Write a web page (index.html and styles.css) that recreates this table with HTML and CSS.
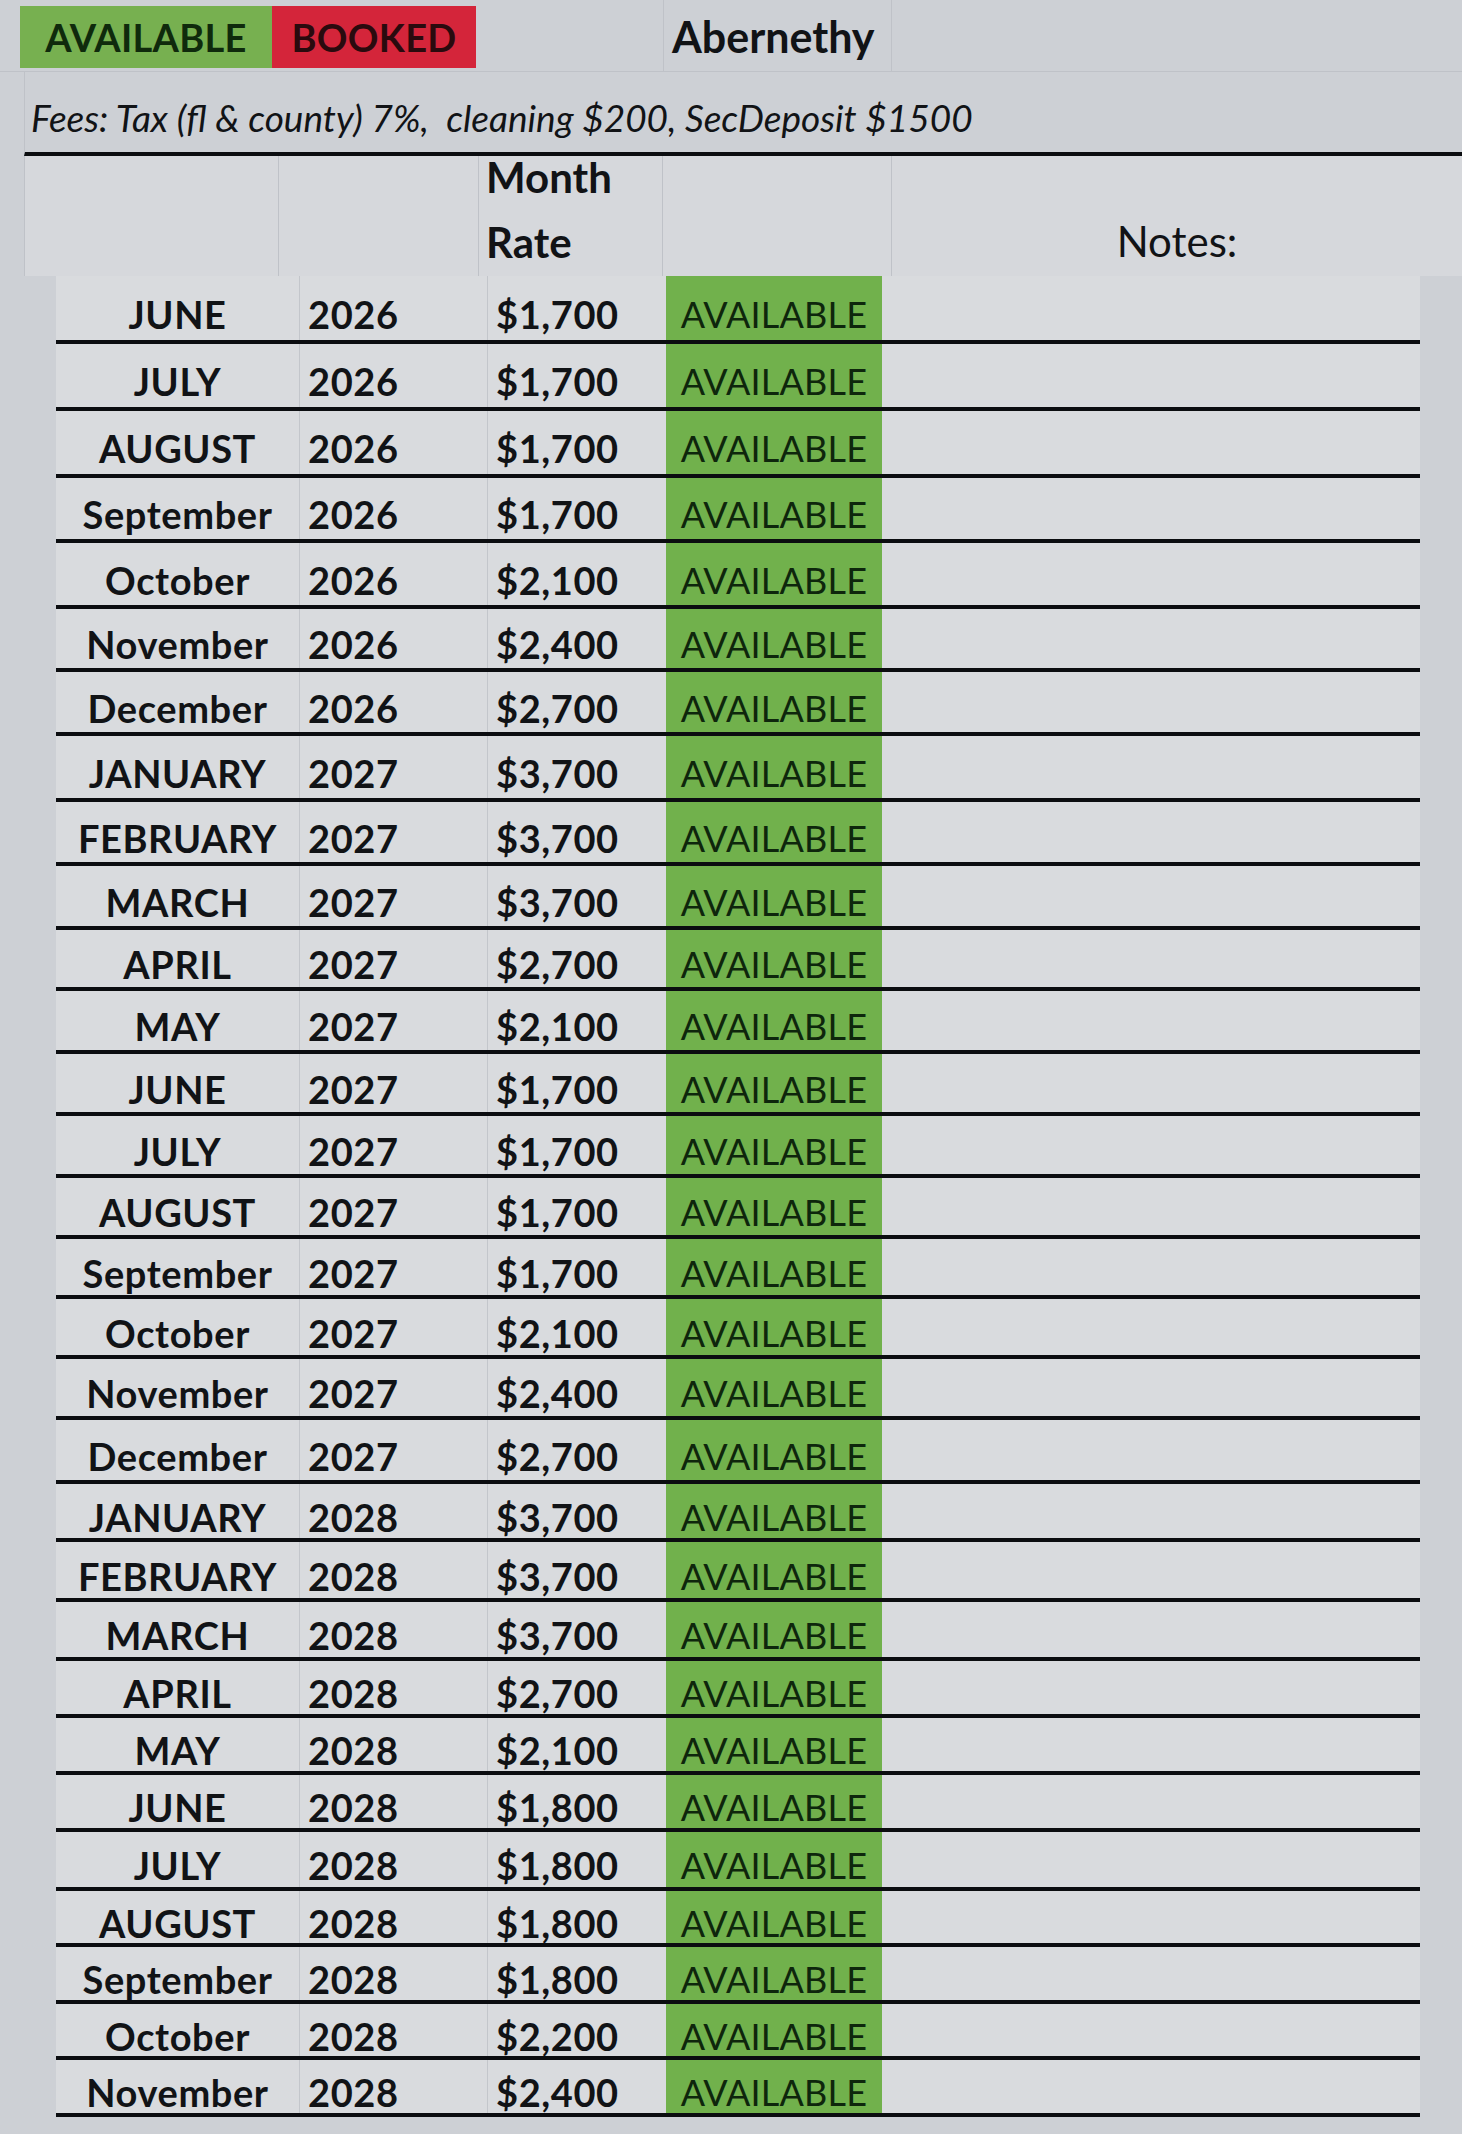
FILE: index.html
```html
<!DOCTYPE html>
<html lang="en">
<head>
<meta charset="utf-8">
<title>Abernethy</title>
<link rel="stylesheet" href="styles.css">
</head>
<body>
<div class="sheet">
  <div class="top-row">
    <div class="legend legend-available">AVAILABLE</div>
    <div class="legend legend-booked">BOOKED</div>
    <div class="title-cell">Abernethy</div>
    <div class="title-rest"></div>
  </div>
  <div class="fees-row">Fees: Tax (fl &amp; county) 7%,&nbsp; cleaning $200, SecDeposit $1500</div>
  <div class="header">
    <div class="hcell c-month"></div>
    <div class="hcell c-year"></div>
    <div class="hcell c-rate"><span>Month</span><span>Rate</span></div>
    <div class="hcell c-status"></div>
    <div class="hcell c-notes"><span class="notes-label">Notes:</span></div>
  </div>
  <div class="rows">
    <div class="row"><div class="c-month">JUNE</div><div class="c-year">2026</div><div class="c-rate">$1,700</div><div class="c-status">AVAILABLE</div><div class="c-notes"></div></div>
    <div class="row"><div class="c-month">JULY</div><div class="c-year">2026</div><div class="c-rate">$1,700</div><div class="c-status">AVAILABLE</div><div class="c-notes"></div></div>
    <div class="row"><div class="c-month">AUGUST</div><div class="c-year">2026</div><div class="c-rate">$1,700</div><div class="c-status">AVAILABLE</div><div class="c-notes"></div></div>
    <div class="row"><div class="c-month">September</div><div class="c-year">2026</div><div class="c-rate">$1,700</div><div class="c-status">AVAILABLE</div><div class="c-notes"></div></div>
    <div class="row"><div class="c-month">October</div><div class="c-year">2026</div><div class="c-rate">$2,100</div><div class="c-status">AVAILABLE</div><div class="c-notes"></div></div>
    <div class="row"><div class="c-month">November</div><div class="c-year">2026</div><div class="c-rate">$2,400</div><div class="c-status">AVAILABLE</div><div class="c-notes"></div></div>
    <div class="row"><div class="c-month">December</div><div class="c-year">2026</div><div class="c-rate">$2,700</div><div class="c-status">AVAILABLE</div><div class="c-notes"></div></div>
    <div class="row"><div class="c-month">JANUARY</div><div class="c-year">2027</div><div class="c-rate">$3,700</div><div class="c-status">AVAILABLE</div><div class="c-notes"></div></div>
    <div class="row"><div class="c-month">FEBRUARY</div><div class="c-year">2027</div><div class="c-rate">$3,700</div><div class="c-status">AVAILABLE</div><div class="c-notes"></div></div>
    <div class="row"><div class="c-month">MARCH</div><div class="c-year">2027</div><div class="c-rate">$3,700</div><div class="c-status">AVAILABLE</div><div class="c-notes"></div></div>
    <div class="row"><div class="c-month">APRIL</div><div class="c-year">2027</div><div class="c-rate">$2,700</div><div class="c-status">AVAILABLE</div><div class="c-notes"></div></div>
    <div class="row"><div class="c-month">MAY</div><div class="c-year">2027</div><div class="c-rate">$2,100</div><div class="c-status">AVAILABLE</div><div class="c-notes"></div></div>
    <div class="row"><div class="c-month">JUNE</div><div class="c-year">2027</div><div class="c-rate">$1,700</div><div class="c-status">AVAILABLE</div><div class="c-notes"></div></div>
    <div class="row"><div class="c-month">JULY</div><div class="c-year">2027</div><div class="c-rate">$1,700</div><div class="c-status">AVAILABLE</div><div class="c-notes"></div></div>
    <div class="row"><div class="c-month">AUGUST</div><div class="c-year">2027</div><div class="c-rate">$1,700</div><div class="c-status">AVAILABLE</div><div class="c-notes"></div></div>
    <div class="row"><div class="c-month">September</div><div class="c-year">2027</div><div class="c-rate">$1,700</div><div class="c-status">AVAILABLE</div><div class="c-notes"></div></div>
    <div class="row"><div class="c-month">October</div><div class="c-year">2027</div><div class="c-rate">$2,100</div><div class="c-status">AVAILABLE</div><div class="c-notes"></div></div>
    <div class="row"><div class="c-month">November</div><div class="c-year">2027</div><div class="c-rate">$2,400</div><div class="c-status">AVAILABLE</div><div class="c-notes"></div></div>
    <div class="row"><div class="c-month">December</div><div class="c-year">2027</div><div class="c-rate">$2,700</div><div class="c-status">AVAILABLE</div><div class="c-notes"></div></div>
    <div class="row"><div class="c-month">JANUARY</div><div class="c-year">2028</div><div class="c-rate">$3,700</div><div class="c-status">AVAILABLE</div><div class="c-notes"></div></div>
    <div class="row"><div class="c-month">FEBRUARY</div><div class="c-year">2028</div><div class="c-rate">$3,700</div><div class="c-status">AVAILABLE</div><div class="c-notes"></div></div>
    <div class="row"><div class="c-month">MARCH</div><div class="c-year">2028</div><div class="c-rate">$3,700</div><div class="c-status">AVAILABLE</div><div class="c-notes"></div></div>
    <div class="row"><div class="c-month">APRIL</div><div class="c-year">2028</div><div class="c-rate">$2,700</div><div class="c-status">AVAILABLE</div><div class="c-notes"></div></div>
    <div class="row"><div class="c-month">MAY</div><div class="c-year">2028</div><div class="c-rate">$2,100</div><div class="c-status">AVAILABLE</div><div class="c-notes"></div></div>
    <div class="row"><div class="c-month">JUNE</div><div class="c-year">2028</div><div class="c-rate">$1,800</div><div class="c-status">AVAILABLE</div><div class="c-notes"></div></div>
    <div class="row"><div class="c-month">JULY</div><div class="c-year">2028</div><div class="c-rate">$1,800</div><div class="c-status">AVAILABLE</div><div class="c-notes"></div></div>
    <div class="row"><div class="c-month">AUGUST</div><div class="c-year">2028</div><div class="c-rate">$1,800</div><div class="c-status">AVAILABLE</div><div class="c-notes"></div></div>
    <div class="row"><div class="c-month">September</div><div class="c-year">2028</div><div class="c-rate">$1,800</div><div class="c-status">AVAILABLE</div><div class="c-notes"></div></div>
    <div class="row"><div class="c-month">October</div><div class="c-year">2028</div><div class="c-rate">$2,200</div><div class="c-status">AVAILABLE</div><div class="c-notes"></div></div>
    <div class="row"><div class="c-month">November</div><div class="c-year">2028</div><div class="c-rate">$2,400</div><div class="c-status">AVAILABLE</div><div class="c-notes"></div></div>
  </div>
</div>
</body>
</html>
```

FILE: styles.css
```css
html, body {
  margin: 0;
  padding: 0;
}

body {
  background: #cdd0d5;
  font-family: Lato, "Open Sans", "Liberation Sans", sans-serif;
  color: #111316;
  width: 1462px;
  height: 2134px;
  overflow: hidden;
}

.sheet {
  display: flex;
  flex-direction: column;
}

/* ---------- top legend row ---------- */
.top-row {
  display: flex;
  align-items: stretch;
  height: 72px;
  padding-top: 6px;
  box-sizing: border-box;
  border-bottom: 1px solid #bfc2c8;
}

.legend {
  display: flex;
  align-items: center;
  justify-content: center;
  height: 62px;
  font-weight: 700;
  font-size: 38px;
  letter-spacing: 0.3px;
}

.legend-available {
  margin-left: 20px;
  width: 252px;
  background: #77b050;
  color: #0f2a0c;
}

.legend-booked {
  width: 204px;
  background: #d4253a;
  color: #2a0a0e;
}

.title-cell {
  margin-left: 187px;
  width: 229px;
  box-sizing: border-box;
  padding-left: 8px;
  margin-top: -6px;
  padding-top: 2px;
  display: flex;
  align-items: center;
  font-weight: 700;
  font-size: 43px;
  border-left: 1px solid #bfc2c8;
  border-right: 1px solid #bfc2c8;
}

.title-rest {
  flex: 1;
}

/* ---------- fees row ---------- */
.fees-row {
  height: 84px;
  box-sizing: border-box;
  margin-left: 24px;
  padding-left: 6px;
  padding-top: 23px;
  font-style: italic;
  font-size: 37px;
  border-bottom: 4px solid #0b0d10;
  border-left: 1px solid #bfc2c8;
}

/* ---------- header ---------- */
.header {
  display: flex;
  height: 120px;
  margin-left: 24px;
  background: #d6d8dc;
}

.hcell {
  box-sizing: border-box;
  border-right: 1px solid #bfc2c8;
}

.header .c-month {
  border-left: 1px solid #bfc2c8;
  width: 255px;
}

.header .c-year {
  width: 200px;
}

.header .c-rate {
  width: 184px;
  display: flex;
  flex-direction: column;
  gap: 23px;
  padding-left: 7px;
  font-weight: 700;
  font-size: 42px;
  line-height: 42px;
}

.header .c-status {
  width: 229px;
}

.header .c-notes {
  flex: 1;
  display: flex;
  justify-content: center;
  align-items: flex-start;
  padding-top: 64px;
  font-size: 42px;
  line-height: 42px;
  border-right: none;
}

/* ---------- data rows ---------- */
.rows {
  display: grid;
  grid-template-columns: 1fr;
  grid-template-rows: 68px 67px 67px 65px 66px 63px 64px 66px 64px 64px 61px 63px 62px 62px 61px 60px 60px 61px 64px 58px 60px 59px 57px 57px 57px 59px 56px 57px 56px 57px;
  margin-left: 56px;
  width: 1364px;
}

.row {
  display: flex;
  align-items: stretch;
  border-bottom: 4px solid #0b0d10;
  background: #d9dbde;
}

.row > div {
  display: flex;
  align-items: center;
  box-sizing: border-box;
  padding-top: 11px;
}

.row .c-month,
.row .c-year,
.row .c-rate {
  font-weight: 700;
  font-size: 38px;
  letter-spacing: 0.6px;
}

.row .c-month {
  width: 244px;
  justify-content: center;
  border-right: 1px solid #c3c6cb;
}

.row .c-year {
  width: 188px;
  padding-left: 8px;
  border-right: 1px solid #c3c6cb;
}

.row .c-rate {
  width: 178px;
  padding-left: 8px;
}

.row .c-status {
  width: 216px;
  justify-content: center;
  background: #71b14c;
  color: #0e260c;
  font-size: 36px;
  letter-spacing: 0.2px;
}

.row .c-notes {
  flex: 1;
}
```
